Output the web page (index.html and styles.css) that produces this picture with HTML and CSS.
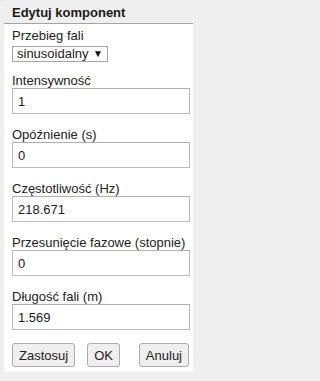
FILE: index.html
```html
<!DOCTYPE html>
<html lang="pl">
<head>
<meta charset="utf-8">
<title>Edytuj komponent</title>
<link rel="stylesheet" href="styles.css">
</head>
<body>
<div class="dialog">
  <div class="header">Edytuj komponent</div>
  <div class="body">
    <label class="label" for="wave">Przebieg fali</label>
    <span class="select-wrap">
      <select id="wave" class="select">
        <option>sinusoidalny</option>
      </select>
    </span>
    <label class="label" for="f1">Intensywność</label>
    <input id="f1" class="input" type="text" value="1">
    <label class="label" for="f2">Opóźnienie (s)</label>
    <input id="f2" class="input" type="text" value="0">
    <label class="label" for="f3">Częstotliwość (Hz)</label>
    <input id="f3" class="input" type="text" value="218.671">
    <label class="label" for="f4">Przesunięcie fazowe (stopnie)</label>
    <input id="f4" class="input" type="text" value="0">
    <label class="label" for="f5">Długość fali (m)</label>
    <input id="f5" class="input" type="text" value="1.569">
    <div class="buttons">
      <button class="btn">Zastosuj</button>
      <button class="btn">OK</button>
      <button class="btn btn-right">Anuluj</button>
    </div>
  </div>
</div>
</body>
</html>
```
FILE: styles.css
```css
html {
  background: #efefef;
}
body {
  margin: 0;
  font-family: "Liberation Sans", Arial, sans-serif;
  font-size: 13px;
  color: #222;
}
.dialog {
  width: 202px;
  background: #efefef;
  border-radius: 3px 3px 0 0;
  box-shadow: -1px -1px 0 #cfe2ea;
  height: 381px;
  box-sizing: border-box;
  padding: 0 9px 9px 4px;
}
.header {
  height: 23px;
  box-sizing: border-box;
  padding: 5px 0 3px 8px;
  line-height: 15px;
  font-weight: bold;
  color: #1a1a1a;
}
.body {
  background: #fff;
  border-top: 1px solid #a3a3a3;
  padding: 4px 3px 5px 8px;
  display: flex;
  flex-direction: column;
}
.label {
  display: block;
  line-height: 15px;
}
.select-wrap {
  position: relative;
  display: block;
  width: 96px;
  margin: 3px 0 11px;
}
.select-wrap::after {
  content: "\25BC";
  position: absolute;
  right: 5px;
  top: 3px;
  font-size: 10px;
  line-height: 10px;
  color: #111;
  pointer-events: none;
}
.select {
  -webkit-appearance: none;
  appearance: none;
  display: block;
  width: 96px;
  height: 16px;
  box-sizing: border-box;
  border: 1px solid #a6a6a6;
  border-radius: 0;
  background: #fff;
  padding: 0 0 0 4px;
  margin: 0;
  font-family: inherit;
  font-size: 13px;
  line-height: 14px;
  color: #222;
}
.input {
  display: block;
  width: 178px;
  height: 26px;
  box-sizing: border-box;
  border: 1px solid #bcbcbc;
  border-top-color: #b0b0b0;
  padding: 0 5px;
  margin: 0 0 13px;
  font-family: inherit;
  font-size: 13px;
  color: #222;
  background: #fff;
}
.buttons {
  display: flex;
  gap: 12px;
  width: 177px;
}
.btn {
  height: 24px;
  box-sizing: border-box;
  padding: 0 6px;
  border: 1px solid #ababab;
  border-radius: 3px;
  background: #efefef;
  font-family: inherit;
  font-size: 13px;
  color: #222;
}
.btn-right {
  margin-left: auto;
}
```
